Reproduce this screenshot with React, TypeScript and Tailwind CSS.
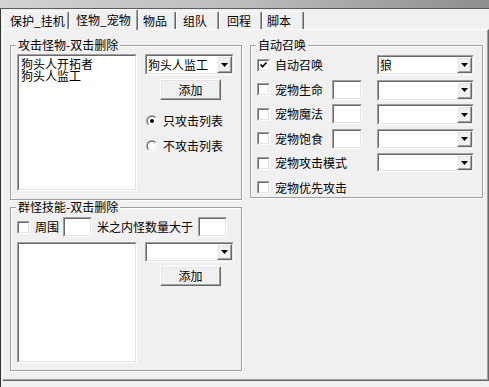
import type { ReactNode } from "react"

const tabs = [
  { label: "保护_挂机", w: "w-[66px]", pl: "pl-[6px]" },
  { label: "怪物_宠物", w: "w-[69px]", pl: "pl-[6px]", active: true },
  { label: "物品", w: "w-[38px]", pl: "pl-[4px]" },
  { label: "组队", w: "w-[43px]", pl: "pl-[6px]" },
  { label: "回程", w: "w-[43px]", pl: "pl-[7px]" },
  { label: "脚本", w: "w-[42px]", pl: "pl-[4px]" },
]

// classic 3D sunken edge (edit boxes, lists, combos)
function Sunken({ className = "", children }: { className?: string; children?: ReactNode }) {
  return (
    <div className={`border border-t-[#a0a0a0] border-l-[#a0a0a0] border-r-white border-b-white ${className}`}>
      <div className="h-full w-full border border-t-[#696969] border-l-[#696969] border-r-[#e3e3e3] border-b-[#e3e3e3] bg-white">
        {children}
      </div>
    </div>
  )
}

function Raised({ className = "", children }: { className?: string; children?: ReactNode }) {
  return (
    <div className={`border border-t-white border-l-white border-r-[#696969] border-b-[#696969] bg-[#f0f0f0] ${className}`}>
      <div className="flex h-full w-full items-center justify-center border border-t-[#e3e3e3] border-l-[#e3e3e3] border-r-[#a0a0a0] border-b-[#a0a0a0]">
        {children}
      </div>
    </div>
  )
}

function Combo({ value = "", className = "" }: { value?: string; className?: string }) {
  return (
    <Sunken className={className}>
      <div className="flex h-full">
        <div className="flex flex-1 items-center pl-[1px]">{value}</div>
        <Raised className="h-full w-[15px]">
          <svg width="7" height="4" viewBox="0 0 7 4">
            <polygon points="0,0 7,0 3.5,4" fill="black" />
          </svg>
        </Raised>
      </div>
    </Sunken>
  )
}

function Check({ checked = false }: { checked?: boolean }) {
  return (
    <Sunken className="h-[13px] w-[13px] shrink-0">
      {checked && (
        <svg width="9" height="9" viewBox="0 0 9 9">
          <polyline points="1.5,3.5 3.5,5.8 7.5,1.5" fill="none" stroke="black" strokeWidth="1.7" />
        </svg>
      )}
    </Sunken>
  )
}

function Radio({ checked = false }: { checked?: boolean }) {
  return (
    <div className="h-[12px] w-[12px] shrink-0 rounded-full border border-t-[#a0a0a0] border-l-[#a0a0a0] border-r-white border-b-white">
      <div className="flex h-full w-full items-center justify-center rounded-full border border-t-[#696969] border-l-[#696969] border-r-[#e3e3e3] border-b-[#e3e3e3] bg-white">
        {checked && <div className="h-[4px] w-[4px] rounded-full bg-black" />}
      </div>
    </div>
  )
}

function Group({ title, className = "", children }: { title: string; className?: string; children?: ReactNode }) {
  return (
    <div className={`relative border border-[#a0a0a0] shadow-[inset_1px_1px_0_#fff,1px_1px_0_#fff] ${className}`}>
      <div className="absolute -top-[7px] left-[5px] bg-[#f0f0f0] px-[2px]">{title}</div>
      {children}
    </div>
  )
}

function CheckLabel({ label, checked }: { label: string; checked?: boolean }) {
  return (
    <div className="flex items-center gap-[5px] whitespace-nowrap">
      <Check checked={checked} />
      <span>{label}</span>
    </div>
  )
}

export default function App() {
  return (
    <div className="flex h-[387px] w-[489px] flex-col bg-[#f0f0f0] font-['Noto_Sans_CJK_SC','Noto_Sans',sans-serif] text-[12px] leading-[12px] text-black">
      <div className="h-[8px] bg-linear-to-r from-[#d2d2d2] via-[#bcbcbc] to-[#8e8e8e]" />
      <div className="h-[1px] bg-[#5c5c5c]" />

      <div className="flex flex-1 flex-col border-l border-l-[#2e382e]">
        {/* tab strip */}
        <div className="flex h-[20px] items-end pl-[2px]">
          {tabs.map((t) =>
            t.active ? (
              <div
                key={t.label}
                className={`relative z-10 -mb-[1px] flex h-[21px] items-center rounded-t-[2px] border-t border-l border-r border-t-white border-l-white border-r-[#696969] bg-[#f0f0f0] shadow-[inset_-1px_0_0_#a0a0a0] ${t.w} ${t.pl}`}
              >
                {t.label}
              </div>
            ) : (
              <div
                key={t.label}
                className={`flex h-[18px] items-center rounded-t-[2px] border-t border-l border-r border-t-white border-l-white border-r-[#696969] bg-[#f0f0f0] shadow-[inset_-1px_0_0_#a0a0a0] ${t.w} ${t.pl}`}
              >
                {t.label}
              </div>
            )
          )}
        </div>

        {/* tab page */}
        <div className="ml-[1px] h-[352px] w-[487px] border border-t-white border-l-white border-r-[#696969] border-b-[#696969] shadow-[inset_-1px_-1px_0_#a0a0a0]">
          <div className="flex gap-[8px] pl-[7px] pt-[15px]">
            <div className="flex flex-col gap-[7px]">
              <Group title="攻击怪物-双击删除" className="flex h-[155px] w-[232px] gap-[8px] pl-[6px] pt-[8px]">
                <Sunken className="h-[137px] w-[120px]">
                  <div className="pl-[2px] pt-[2px]">
                    <div>狗头人开拓者</div>
                    <div>狗头人监工</div>
                  </div>
                </Sunken>
                <div className="flex w-[89px] flex-col">
                  <Combo value="狗头人监工" className="h-[21px] w-[89px]" />
                  <Raised className="ml-[15px] mt-[4px] h-[21px] w-[61px]">添加</Raised>
                  <div className="ml-[1px] mt-[15px] flex h-[12px] items-center gap-[5px]">
                    <Radio checked />
                    <span>只攻击列表</span>
                  </div>
                  <div className="ml-[1px] mt-[13px] flex h-[12px] items-center gap-[5px]">
                    <Radio />
                    <span>不攻击列表</span>
                  </div>
                </div>
              </Group>

              <Group title="群怪技能-双击删除" className="h-[164px] w-[232px] pl-[6px] pt-[9px]">
                <div className="flex h-[20px] items-center whitespace-nowrap">
                  <Check />
                  <span className="ml-[5px]">周围</span>
                  <Sunken className="ml-[4px] h-[20px] w-[29px]" />
                  <span className="ml-[5px]">米之内怪数量大于</span>
                  <Sunken className="ml-[5px] h-[20px] w-[29px]" />
                </div>
                <div className="mt-[5px] flex gap-[8px]">
                  <Sunken className="h-[121px] w-[120px]" />
                  <div className="flex w-[89px] flex-col">
                    <Combo className="h-[20px] w-[89px]" />
                    <Raised className="ml-[15px] mt-[4px] h-[20px] w-[61px]">添加</Raised>
                  </div>
                </div>
              </Group>
            </div>

            <Group title="自动召唤" className="h-[153px] w-[233px] pl-[6px] pt-[9px]">
              <div className="grid auto-rows-[20px] grid-cols-[75px_45px_97px] gap-y-[4.5px]">
                <div className="col-span-2 flex items-center">
                  <CheckLabel label="自动召唤" checked />
                </div>
                <Combo value="狼" className="h-[20px]" />

                <div className="flex items-center">
                  <CheckLabel label="宠物生命" />
                </div>
                <Sunken className="h-[20px] w-[30px]" />
                <Combo className="h-[21px]" />

                <div className="flex items-center">
                  <CheckLabel label="宠物魔法" />
                </div>
                <Sunken className="h-[20px] w-[30px]" />
                <Combo className="h-[21px]" />

                <div className="flex items-center">
                  <CheckLabel label="宠物饱食" />
                </div>
                <Sunken className="h-[20px] w-[30px]" />
                <Combo className="h-[20px]" />

                <div className="col-span-2 flex items-center">
                  <CheckLabel label="宠物攻击模式" />
                </div>
                <Combo className="h-[19px]" />

                <div className="col-span-3 flex items-center">
                  <CheckLabel label="宠物优先攻击" />
                </div>
              </div>
            </Group>
          </div>
        </div>
      </div>
    </div>
  )
}
